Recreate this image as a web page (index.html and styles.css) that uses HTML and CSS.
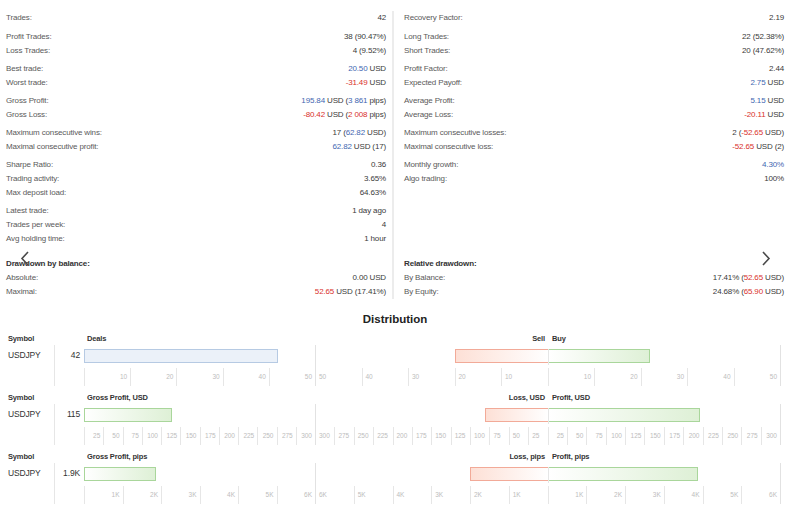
FILE: index.html
```html
<!DOCTYPE html>
<html lang="en">
<head>
    <meta charset="UTF-8">
    <title>Signal statistics</title>
    <link rel="stylesheet" href="styles.css">
</head>
<body>

<div class="stats">
    <div class="col">
        <div class="grp first">
            <div class="row"><span>Trades:</span><span>42</span></div>
        </div>
        <div class="grp">
            <div class="row"><span>Profit Trades:</span><span>38 (90.47%)</span></div>
            <div class="row"><span>Loss Trades:</span><span>4 (9.52%)</span></div>
        </div>
        <div class="grp">
            <div class="row"><span>Best trade:</span><span><span class="pos">20.50</span> USD</span></div>
            <div class="row"><span>Worst trade:</span><span><span class="neg">-31.49</span> USD</span></div>
        </div>
        <div class="grp">
            <div class="row"><span>Gross Profit:</span><span><span class="pos">195.84</span> USD (<span class="pos">3 861</span> pips)</span></div>
            <div class="row"><span>Gross Loss:</span><span><span class="neg">-80.42</span> USD (<span class="neg">2 008</span> pips)</span></div>
        </div>
        <div class="grp">
            <div class="row"><span>Maximum consecutive wins:</span><span>17 (<span class="pos">62.82</span> USD)</span></div>
            <div class="row"><span>Maximal consecutive profit:</span><span><span class="pos">62.82</span> USD (17)</span></div>
        </div>
        <div class="grp">
            <div class="row"><span>Sharpe Ratio:</span><span>0.36</span></div>
            <div class="row"><span>Trading activity:</span><span>3.65%</span></div>
            <div class="row"><span>Max deposit load:</span><span>64.63%</span></div>
        </div>
        <div class="grp">
            <div class="row"><span>Latest trade:</span><span>1 day ago</span></div>
            <div class="row"><span>Trades per week:</span><span>4</span></div>
            <div class="row"><span>Avg holding time:</span><span>1 hour</span></div>
        </div>
    </div>

    <div class="col right">
        <div class="grp first">
            <div class="row"><span>Recovery Factor:</span><span>2.19</span></div>
        </div>
        <div class="grp">
            <div class="row"><span>Long Trades:</span><span>22 (52.38%)</span></div>
            <div class="row"><span>Short Trades:</span><span>20 (47.62%)</span></div>
        </div>
        <div class="grp">
            <div class="row"><span>Profit Factor:</span><span>2.44</span></div>
            <div class="row"><span>Expected Payoff:</span><span><span class="pos">2.75</span> USD</span></div>
        </div>
        <div class="grp">
            <div class="row"><span>Average Profit:</span><span><span class="pos">5.15</span> USD</span></div>
            <div class="row"><span>Average Loss:</span><span><span class="neg">-20.11</span> USD</span></div>
        </div>
        <div class="grp">
            <div class="row"><span>Maximum consecutive losses:</span><span>2 (<span class="neg">-52.65</span> USD)</span></div>
            <div class="row"><span>Maximal consecutive loss:</span><span><span class="neg">-52.65</span> USD (2)</span></div>
        </div>
        <div class="grp">
            <div class="row"><span>Monthly growth:</span><span class="pos">4.30%</span></div>
            <div class="row"><span>Algo trading:</span><span>100%</span></div>
        </div>
    </div>

    <div class="col dd">
        <div class="row"><span class="dd-title">Drawdown by balance:</span></div>
        <div class="row"><span>Absolute:</span><span>0.00 USD</span></div>
        <div class="row"><span>Maximal:</span><span><span class="neg">52.65</span> USD (17.41%)</span></div>
    </div>

    <div class="col right dd">
        <div class="row"><span class="dd-title">Relative drawdown:</span></div>
        <div class="row"><span>By Balance:</span><span>17.41% (<span class="neg">52.65</span> USD)</span></div>
        <div class="row"><span>By Equity:</span><span>24.68% (<span class="neg">65.90</span> USD)</span></div>
    </div>

    <svg class="arrow prev" viewBox="0 0 10 15"><polyline points="8,1 2,7.5 8,14"/></svg>
    <svg class="arrow next" viewBox="0 0 10 15"><polyline points="2,1 8,7.5 2,14"/></svg>
</div>

<h2 class="dist-title">Distribution</h2>

<div class="drow">
    <div class="dhead">
        <div class="c-sym">Symbol</div>
        <div class="c-val"></div>
        <div class="c-left">Deals</div>
        <div class="c-right"><span class="h-l">Sell</span><span class="h-r">Buy</span></div>
    </div>
    <div class="dbody">
        <div class="c-sym sym">USDJPY</div>
        <div class="c-val">42</div>
        <div class="c-left chart">
            <div class="bars"><div class="bar blue" style="width: 84%"></div></div>
            <div class="scale asc" data-labels="10,20,30,40,50"></div>
        </div>
        <div class="c-right chart">
            <div class="bars split">
                <div class="half l"><div class="bar red" style="width: 40%"></div></div>
                <div class="half r"><div class="bar green" style="width: 44%"></div></div>
            </div>
            <div class="split">
                <div class="scale desc" data-labels="50,40,30,20,10"></div>
                <div class="scale asc r" data-labels="10,20,30,40,50"></div>
            </div>
        </div>
    </div>
</div>

<div class="drow">
    <div class="dhead">
        <div class="c-sym">Symbol</div>
        <div class="c-val"></div>
        <div class="c-left">Gross Profit, USD</div>
        <div class="c-right"><span class="h-l">Loss, USD</span><span class="h-r">Profit, USD</span></div>
    </div>
    <div class="dbody">
        <div class="c-sym sym">USDJPY</div>
        <div class="c-val">115</div>
        <div class="c-left chart">
            <div class="bars"><div class="bar green" style="width: 38.3%"></div></div>
            <div class="scale asc" data-labels="25,50,75,100,125,150,175,200,225,250,275,300"></div>
        </div>
        <div class="c-right chart">
            <div class="bars split">
                <div class="half l"><div class="bar red" style="width: 26.8%"></div></div>
                <div class="half r"><div class="bar green" style="width: 65.3%"></div></div>
            </div>
            <div class="split">
                <div class="scale desc" data-labels="300,275,250,225,200,175,150,125,100,75,50,25"></div>
                <div class="scale asc r" data-labels="25,50,75,100,125,150,175,200,225,250,275,300"></div>
            </div>
        </div>
    </div>
</div>

<div class="drow">
    <div class="dhead">
        <div class="c-sym">Symbol</div>
        <div class="c-val"></div>
        <div class="c-left">Gross Profit, pips</div>
        <div class="c-right"><span class="h-l">Loss, pips</span><span class="h-r">Profit, pips</span></div>
    </div>
    <div class="dbody">
        <div class="c-sym sym">USDJPY</div>
        <div class="c-val">1.9K</div>
        <div class="c-left chart">
            <div class="bars"><div class="bar green" style="width: 31%"></div></div>
            <div class="scale asc" data-labels="1K,2K,3K,4K,5K,6K"></div>
        </div>
        <div class="c-right chart">
            <div class="bars split">
                <div class="half l"><div class="bar red" style="width: 33.5%"></div></div>
                <div class="half r"><div class="bar green" style="width: 64.4%"></div></div>
            </div>
            <div class="split">
                <div class="scale desc" data-labels="6K,5K,4K,3K,2K,1K"></div>
                <div class="scale asc r" data-labels="1K,2K,3K,4K,5K,6K"></div>
            </div>
        </div>
    </div>
</div>

<script>
    document.querySelectorAll('.scale').forEach(scale => {
        scale.dataset.labels.split(',').forEach(label => {
            const tick = document.createElement('div');
            tick.className = 'tick';
            tick.textContent = label;
            scale.appendChild(tick);
        });
    });
</script>

</body>
</html>
```

FILE: styles.css
```css
body {
    font-family: "Liberation Sans", Arial, sans-serif;
    font-size: 8px;
    letter-spacing: -0.15px;
    color: #3a3a3a;
    background-color: #fff;
    margin: 0;
    padding: 0;
}

.stats {
    position: relative;
    display: grid;
    grid-template-columns: 392px 1fr;
    padding-top: 11px;
}

.col {
    padding: 0 6px;
}

.col.right {
    border-left: 2px solid #ececec;
    padding-left: 10px;
}

.grp {
    margin-bottom: 4px;
}

.grp.first {
    margin-bottom: 5px;
}

.row {
    display: flex;
    justify-content: space-between;
    height: 14px;
    line-height: 14px;
}

.row > :first-child {
    color: #5a5a5a;
}

.row > .dd-title {
    font-weight: bold;
    color: #333;
}

.dd {
    padding-top: 7px;
}

.pos {
    color: #3f67b1;
}

.neg {
    color: #d9312b;
}

.arrow {
    position: absolute;
    top: 251px;
    width: 10px;
    height: 15px;
    fill: none;
    stroke: #4a4a4a;
    stroke-width: 1.6;
}

.arrow.prev {
    left: 20px;
}

.arrow.next {
    left: 761px;
}

.dist-title {
    text-align: center;
    font-size: 11.5px;
    letter-spacing: 0;
    line-height: 16px;
    color: #222;
    margin: 12px 0 6px;
}

/* distribution rows */

.drow {
    margin-bottom: 6px;
}

.dhead,
.dbody {
    display: flex;
}

.dhead {
    height: 12px;
    line-height: 12px;
    font-size: 7.5px;
    font-weight: bold;
    color: #333;
}

.dbody {
    height: 41px;
}

.c-sym {
    width: 55px;
    padding-left: 8px;
    box-sizing: border-box;
}

.c-val {
    width: 29px;
    padding-right: 4px;
    box-sizing: border-box;
    text-align: right;
    font-size: 8.5px;
    line-height: 20px;
    color: #333;
}

.c-left {
    width: 232px;
    padding-left: 3px;
    box-sizing: border-box;
}

.c-right {
    width: 465px;
    display: flex;
    box-sizing: border-box;
}

.h-l,
.h-r {
    flex: 1;
}

.h-l {
    text-align: right;
    padding-right: 3px;
}

.h-r {
    padding-left: 4px;
}

.sym {
    border-right: 1px solid #e6e6e6;
    font-size: 8.5px;
    line-height: 20px;
    color: #333;
}

.chart {
    display: flex;
    flex-direction: column;
    padding: 0;
    border-right: 1px solid #e2e2e2;
}

.bars {
    height: 20px;
    padding-top: 4px;
    box-sizing: border-box;
}

.split {
    display: flex;
}

.half {
    flex: 1;
    display: flex;
}

.half.l {
    justify-content: flex-end;
}

.half.r {
    border-left: 1px solid #e6e6e6;
}

.bar {
    height: 14px;
    box-sizing: border-box;
}

.bar.blue {
    background-color: #ebf1f9;
    border: 1px solid #b6cae3;
}

.bar.green {
    background: linear-gradient(to right, #fff, #def0d6);
    border: 1px solid #a9d69b;
}

.bar.red {
    background: linear-gradient(to right, #fde0d6, #fff);
    border: 1px solid #f2aa98;
    border-right: none;
}

.half.r .bar.green {
    border-left: none;
}

.scale {
    flex: 1;
    display: flex;
    height: 18px;
    margin-top: 3px;
}

.c-left .scale {
    border-left: 1px solid #e6e6e6;
}

.scale.r {
    border-left: 1px solid #e6e6e6;
}

.tick {
    flex: 1;
    font-size: 6.5px;
    letter-spacing: 0;
    line-height: 18px;
    color: #bdbdbd;
}

.scale.asc .tick {
    text-align: right;
    padding-right: 3px;
    border-right: 1px solid #e6e6e6;
}

.scale.asc .tick:last-child {
    border-right: none;
}

.scale.desc .tick {
    padding-left: 3px;
    border-left: 1px solid #e6e6e6;
}

.scale.desc .tick:first-child {
    border-left: none;
}
```
